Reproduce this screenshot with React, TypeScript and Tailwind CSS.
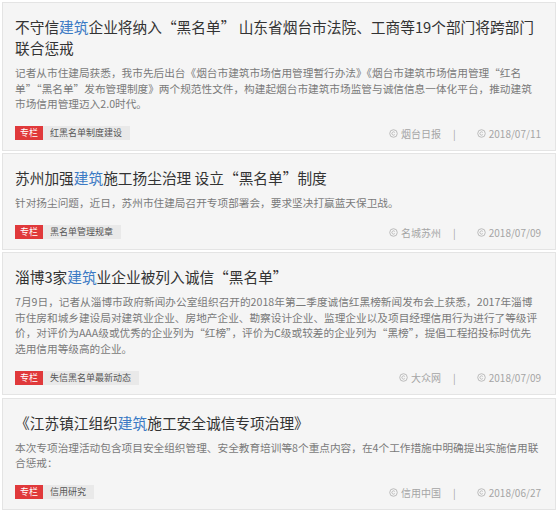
import React from 'react';

interface NewsItem {
  title: React.ReactNode;
  summary: string;
  tag: string;
  source: string;
  date: string;
}

const Hl = ({ children }: { children: React.ReactNode }) => (
  <span className="text-[#3b7ac4]">{children}</span>
);

const news: NewsItem[] = [
  {
    title: (
      <>
        不守信<Hl>建筑</Hl>企业将纳入“黑名单” 山东省烟台市法院、工商等19个部门将跨部门联合惩戒
      </>
    ),
    summary:
      '记者从市住建局获悉，我市先后出台《烟台市建筑市场信用管理暂行办法》《烟台市建筑市场信用管理“红名单”“黑名单”发布管理制度》两个规范性文件，构建起烟台市建筑市场监管与诚信信息一体化平台，推动建筑市场信用管理迈入2.0时代。',
    tag: '红黑名单制度建设',
    source: '烟台日报',
    date: '2018/07/11',
  },
  {
    title: (
      <>
        苏州加强<Hl>建筑</Hl>施工扬尘治理 设立“黑名单”制度
      </>
    ),
    summary: '针对扬尘问题，近日，苏州市住建局召开专项部署会，要求坚决打赢蓝天保卫战。',
    tag: '黑名单管理规章',
    source: '名城苏州',
    date: '2018/07/09',
  },
  {
    title: (
      <>
        淄博3家<Hl>建筑</Hl>业企业被列入诚信“黑名单”
      </>
    ),
    summary:
      '7月9日，记者从淄博市政府新闻办公室组织召开的2018年第二季度诚信红黑榜新闻发布会上获悉，2017年淄博市住房和城乡建设局对建筑业企业、房地产企业、勘察设计企业、监理企业以及项目经理信用行为进行了等级评价，对评价为AAA级或优秀的企业列为“红榜”，评价为C级或较差的企业列为“黑榜”，提倡工程招投标时优先选用信用等级高的企业。',
    tag: '失信黑名单最新动态',
    source: '大众网',
    date: '2018/07/09',
  },
  {
    title: (
      <>
        《江苏镇江组织<Hl>建筑</Hl>施工安全诚信专项治理》
      </>
    ),
    summary:
      '本次专项治理活动包含项目安全组织管理、安全教育培训等8个重点内容，在4个工作措施中明确提出实施信用联合惩戒：',
    tag: '信用研究',
    source: '信用中国',
    date: '2018/06/27',
  },
];

const MetaIcon = () => (
  <svg width="9" height="9" viewBox="0 0 10 10" className="mr-[3px]">
    <circle cx="5" cy="5" r="4.2" fill="none" stroke="#b5b5b5" strokeWidth="1" />
    <path d="M6.4 3.8A1.8 1.8 0 1 0 6.4 6.2" fill="none" stroke="#b5b5b5" strokeWidth="1" />
  </svg>
);

const NewsCard = ({ item }: { item: NewsItem }) => (
  <div className="bg-[#f5f5f5] border border-[#e4e4e4] pl-[12px] pr-[14px] pt-[13px] pb-[9px]">
    <h3 className="text-[14.7px] leading-[21px] text-[#333] font-normal">{item.title}</h3>
    <p className="mt-[7px] text-[10.67px] leading-[15.5px] text-[#7a7a7a]">{item.summary}</p>
    <div className="mt-[14px] flex items-center justify-between">
      <div className="flex h-[14px] text-[9px] leading-[14px]">
        <span className="bg-[#e0393b] text-white px-[5px]">专栏</span>
        <span className="bg-[#e9e9e9] text-[#555] pl-[7px] pr-[8px]">{item.tag}</span>
      </div>
      <div className="flex items-center text-[10px] text-[#a5a5a5]">
        <MetaIcon />
        <span>{item.source}</span>
        <span className="ml-[12px] mr-[10px]">|</span>
        <span className="ml-[11px] flex items-center">
          <MetaIcon />
          {item.date}
        </span>
      </div>
    </div>
  </div>
);

export default function App() {
  return (
    <div
      className="w-[560px] h-[514px] overflow-hidden bg-white pt-[2px] pl-[2px] pr-[4px] flex flex-col gap-[2.5px]"
      style={{ fontFamily: '"Noto Sans CJK SC", "Noto Sans", sans-serif' }}
    >
      {news.map((item, i) => (
        <NewsCard key={i} item={item} />
      ))}
    </div>
  );
}
